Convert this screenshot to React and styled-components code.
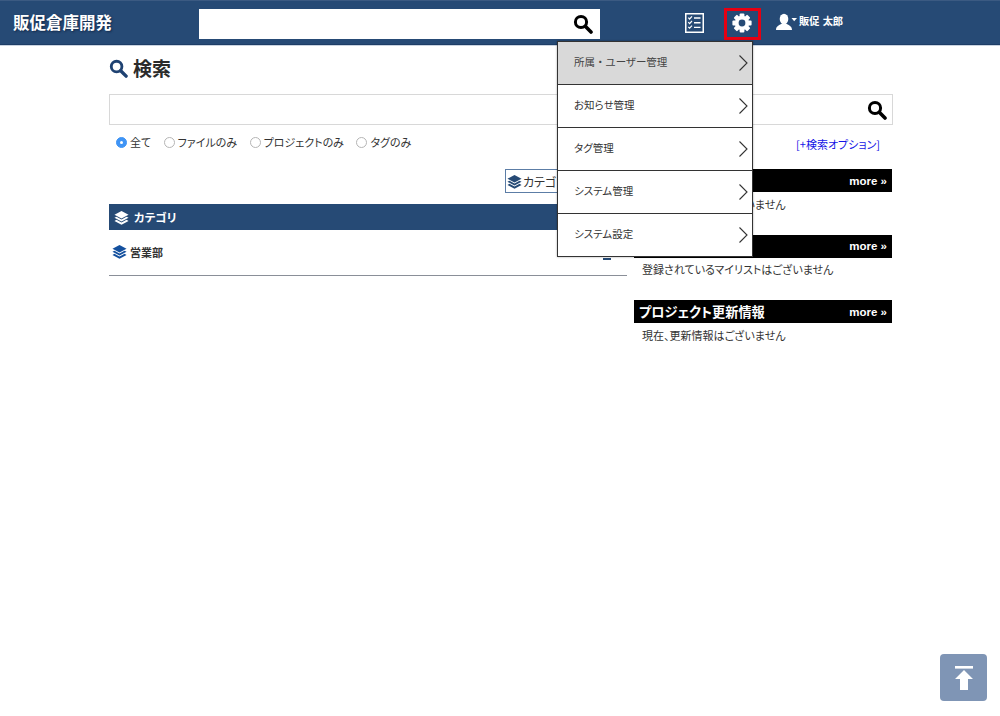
import React from "react";
import styled, { createGlobalStyle } from "styled-components";

const Global = createGlobalStyle`
  html, body { margin: 0; padding: 0; background: #fff; }
  body {
    font-family: "Noto Sans CJK JP", "Liberation Sans", sans-serif;
    color: #333;
    font-feature-settings: "palt";
    min-height: 716px;
    overflow: hidden;
  }
  * { box-sizing: border-box; }
`;

const Header = styled.header`
  position: relative;
  height: 46px;
  background: #264a75;
  border-top: 1px solid #3b5a82;
  border-bottom: 1px solid #c9d3e0;
  box-shadow: inset 0 -1px 0 #1d3d66;
  display: flex;
  align-items: flex-start;
`;
const Logo = styled.div`
  width: 199px;
  padding: 11px 0 0 13px;
  font-size: 16.5px;
  line-height: 21px;
  font-weight: 700;
  color: #fff;
  text-shadow: 1px 1px 2px #12294a;
  white-space: nowrap;
`;
const HeadSearch = styled.div`
  margin-top: 8px;
  width: 401px;
  height: 30px;
  background: #fff;
  display: flex;
  align-items: center;
  justify-content: flex-end;
  padding-right: 7px;
`;
const ListButton = styled.div`
  margin: 12px 0 0 85px;
  width: 19px;
  height: 20px;
`;
const GearButton = styled.div`
  margin: 7px 0 0 20px;
  width: 37px;
  height: 32px;
  border: 3px solid #e60012;
  padding: 0 2px 3px 0;
  display: flex;
  align-items: center;
  justify-content: center;
`;
const UserBox = styled.div`
  margin: 8px 0 0 15px;
  display: flex;
  align-items: center;
  height: 26px;
  color: #fff;
  font-size: 10.2px;
  font-weight: 700;
  white-space: nowrap;
`;
const UserName = styled.span`
  margin: -4px 0 0 1px;
  word-spacing: 1px;
`;

const Menu = styled.nav`
  position: absolute;
  left: 557px;
  top: 41px;
  width: 196px;
  border: 1px solid #333;
  background: #fff;
  z-index: 5;
  box-shadow: 0 0 2px rgba(0, 0, 0, 0.35);
`;
const MenuItem = styled.div`
  height: 43px;
  display: flex;
  align-items: center;
  justify-content: space-between;
  padding: 0 3px 0 16px;
  font-size: 10.5px;
  color: ${(p) => (p.$active ? "#444" : "#333")};
  background: ${(p) => (p.$active ? "#d9d9d9" : "#fff")};
  border-bottom: 1px solid #333;
  &:last-child { height: 42px; border-bottom: 0; }
`;
const MenuLabel = styled.span`
  margin-top: -3px;
`;
const FullWidth = styled.span`
  font-feature-settings: normal;
`;

const Page = styled.main`
  width: 784px;
  margin: 0 0 0 109px;
`;
const Title = styled.h1`
  margin: 0;
  height: 48px;
  padding-bottom: 4px;
  display: flex;
  align-items: center;
  gap: 5px;
  font-size: 19px;
  line-height: 26px;
  font-weight: 700;
  color: #2b2b2b;
`;
const SearchBar = styled.div`
  height: 31px;
  border: 1px solid #d8d8d8;
  display: flex;
  align-items: center;
  justify-content: flex-end;
  padding-right: 5px;
`;
const Options = styled.div`
  display: flex;
  align-items: center;
  height: 18px;
  margin-top: 8px;
  padding-left: 7px;
  font-size: 11px;
  color: #333;
`;
const Radio = styled.label`
  display: flex;
  align-items: center;
  gap: 3px;
  margin-right: 12.5px;
  white-space: nowrap;
`;
const Dot = styled.span`
  width: 11px;
  height: 11px;
  margin-top: 1px;
  border-radius: 50%;
  border: 1px solid ${(p) => (p.$on ? "#3f94f5" : "#b5b5b5")};
  background: ${(p) => (p.$on ? "#3f94f5" : "#fff")};
  display: flex;
  align-items: center;
  justify-content: center;
  &::after {
    content: "";
    display: ${(p) => (p.$on ? "block" : "none")};
    width: 3px;
    height: 3px;
    border-radius: 50%;
    background: #fff;
  }
`;

const Columns = styled.div`
  display: grid;
  grid-template-columns: 518px 258px;
  column-gap: 7px;
`;
const LeftCol = styled.section`
  padding-top: 18px;
`;
const TabRow = styled.div`
  display: flex;
  justify-content: flex-end;
  height: 24px;
`;
const Tab = styled.div`
  width: 122px;
  height: 24px;
  border: 1px solid #5c7da6;
  display: flex;
  align-items: center;
  gap: 1px;
  padding-left: 1px;
  font-size: 12px;
  color: #333;
`;
const SectionHead = styled.div`
  margin-top: 11px;
  height: 26px;
  background: #264a75;
  display: flex;
  align-items: center;
  gap: 5px;
  padding-left: 5px;
  color: #fff;
  font-size: 11.5px;
  font-weight: 700;
`;
const CatRow = styled.div`
  position: relative;
  height: 46px;
  border-bottom: 1px solid #8a8f98;
  display: flex;
  align-items: center;
  gap: 3px;
  padding: 0 0 2px 3px;
  font-size: 11px;
  font-weight: 700;
  color: #333;
`;
const Minus = styled.span`
  position: absolute;
  right: 16px;
  top: 28px;
  width: 8px;
  height: 2px;
  background: #264a75;
`;

const RightCol = styled.aside``;
const OptionLink = styled.div`
  margin-top: -16px;
  height: 34px;
  padding-right: 12px;
  text-align: right;
  font-size: 11px;
  line-height: 18px;
  color: #1414e6;
`;
const Block = styled.div`
  height: 65.5px;
  &:last-child { height: auto; }
`;
const Bar = styled.div`
  height: 23px;
  background: #000;
  color: #fff;
  display: flex;
  align-items: center;
  justify-content: space-between;
  padding: 0 5px;
  font-size: 13.2px;
  font-weight: 700;
  white-space: nowrap;
`;
const More = styled.span`
  font-family: "Liberation Sans", sans-serif;
  font-size: 11.5px;
  font-weight: 700;
`;
const Note = styled.p`
  margin: 3.5px 0 0 8px;
  font-size: 11px;
  line-height: 16px;
  color: #333;
`;

const TopButton = styled.div`
  position: fixed;
  left: 940px;
  top: 654px;
  width: 47px;
  height: 47px;
  border-radius: 4px;
  background: #7f95b5;
  display: flex;
  align-items: center;
  justify-content: center;
`;

const Loupe = ({ size = 20, color = "#000" }) => (
  <svg width={size} height={size} viewBox="0 0 20 20">
    <circle cx="8" cy="8" r="5.6" fill="none" stroke={color} strokeWidth="3" />
    <path d="M12.3 12.3 L18 18" stroke={color} strokeWidth="3.6" strokeLinecap="round" />
  </svg>
);
const Layers = ({ size = 15, color = "#264a75" }) => (
  <svg width={size} height={size} viewBox="0 0 16 16" fill={color}>
    <path d="M8 1 L15.5 5 L8 9 L.5 5 Z" />
    <path d="M2.6 7.2 L8 10.1 L13.4 7.2 L15.5 8.3 L8 12.3 L.5 8.3 Z" />
    <path d="M2.6 10.5 L8 13.4 L13.4 10.5 L15.5 11.6 L8 15.6 L.5 11.6 Z" />
  </svg>
);
const ChecklistIcon = () => (
  <svg width="19" height="20" viewBox="0 0 19 20">
    <rect x=".75" y=".75" width="17.5" height="18.5" fill="none" stroke="#fff" strokeWidth="1.5" />
    <g stroke="#fff" strokeWidth="1.2" fill="none">
      <path d="M3.3 4.6 L4.6 6 L7 3.4" />
      <path d="M3.3 9.2 L4.6 10.6 L7 8" />
      <path d="M3.3 13.8 L4.6 15.2 L7 12.6" />
      <path d="M9 5 H15.5 M9 9.7 H15.5 M9 14.4 H15.5" strokeWidth="1.4" />
    </g>
  </svg>
);
const Gear = () => (
  <svg width="20" height="20" viewBox="0 0 20 20">
    <g fill="#fff">
      {[0, 45, 90, 135].map((a) => (
        <rect key={a} x="7.6" y="0.4" width="4.8" height="19.2" rx="1" transform={`rotate(${a} 10 10)`} />
      ))}
      <circle cx="10" cy="10" r="7.2" />
    </g>
    <circle cx="10" cy="10" r="3.4" fill="#264a75" />
  </svg>
);
const UserIcon = () => (
  <svg width="22" height="18" viewBox="0 0 22 18" fill="#fff">
    <ellipse cx="8" cy="6" rx="4.3" ry="5.2" />
    <path d="M0 17 C0 12.5 4 12.2 6 10.5 H10 C12 12.2 16 12.5 16 17 Z" />
    <path d="M15.5 5 H21 L18.2 8.2 Z" />
  </svg>
);
const Chevron = () => (
  <svg width="11" height="18" viewBox="0 0 11 18">
    <path d="M1.5 1.5 L9 9 L1.5 16.5" fill="none" stroke="#333" strokeWidth="1.1" />
  </svg>
);
const ArrowTop = () => (
  <svg width="20" height="24" viewBox="0 0 20 24" fill="#fff">
    <rect x="1" y="0" width="18" height="2.6" />
    <path d="M10 4 L19 13 H14 V24 H6 V13 H1 Z" />
  </svg>
);

const menu = [
  <>所属<FullWidth>・</FullWidth>ユーザー管理</>,
  "お知らせ管理",
  "タグ管理",
  "システム管理",
  "システム設定",
];
const radios = ["全て", "ファイルのみ", "プロジェクトのみ", "タグのみ"];
const blocks = [
  ["新着ファイル情報", "現在、更新情報はございません"],
  ["マイリスト", "登録されているマイリストはございません"],
  ["プロジェクト更新情報", "現在、更新情報はございません"],
];

export default function App() {
  return (
    <>
      <Global />
      <Header>
        <Logo>販促倉庫開発</Logo>
        <HeadSearch><Loupe /></HeadSearch>
        <ListButton><ChecklistIcon /></ListButton>
        <GearButton><Gear /></GearButton>
        <UserBox><UserIcon /><UserName>販促 太郎</UserName></UserBox>
      </Header>
      <Menu>
        {menu.map((m, i) => (
          <MenuItem key={i} $active={i === 0}><MenuLabel>{m}</MenuLabel><Chevron /></MenuItem>
        ))}
      </Menu>
      <Page>
        <Title><Loupe size={19} color="#1f4272" /><span>検索</span></Title>
        <SearchBar><Loupe /></SearchBar>
        <Options>
          {radios.map((r, i) => (
            <Radio key={r}><Dot $on={i === 0} />{r}</Radio>
          ))}
        </Options>
        <Columns>
          <LeftCol>
            <TabRow><Tab><Layers />カテゴリ</Tab></TabRow>
            <SectionHead><Layers color="#fff" />カテゴリ</SectionHead>
            <CatRow><Layers color="#14509e" />営業部<Minus /></CatRow>
          </LeftCol>
          <RightCol>
            <OptionLink>[+検索オプション]</OptionLink>
            {blocks.map(([t, n]) => (
              <Block key={t}>
                <Bar><span>{t}</span><More>more »</More></Bar>
                <Note>{n}</Note>
              </Block>
            ))}
          </RightCol>
        </Columns>
      </Page>
      <TopButton><ArrowTop /></TopButton>
    </>
  );
}
